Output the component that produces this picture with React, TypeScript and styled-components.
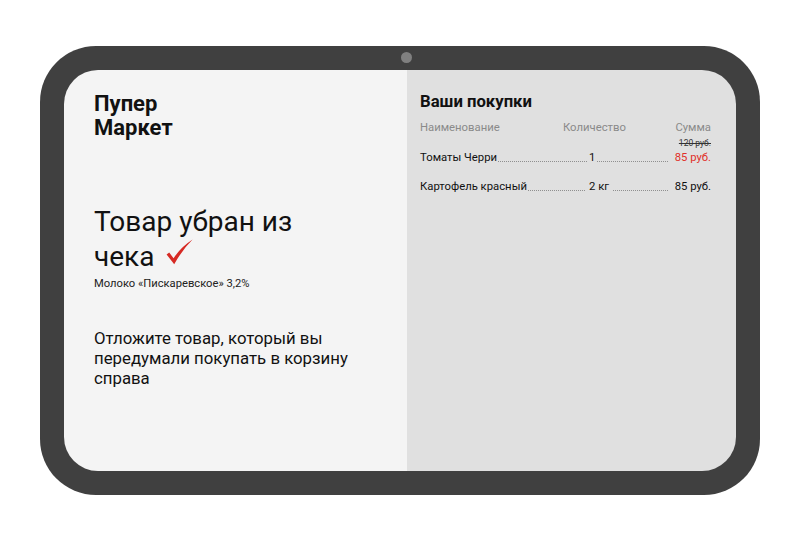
import React from "react";
import styled, { createGlobalStyle } from "styled-components";

const Global = createGlobalStyle`
  html, body { margin: 0; padding: 0; background: #ffffff; }
  body { font-family: Roboto, "Noto Sans", Arial, sans-serif; color: #111; }
`;

const Page = styled.div`
  width: 800px;
  height: 537px;
  padding: 46px 40px 0 40px;
  box-sizing: border-box;
`;

const Device = styled.div`
  position: relative;
  width: 720px;
  height: 449px;
  box-sizing: border-box;
  padding: 24px;
  background: #404040;
  border-radius: 56px;
`;

const Camera = styled.div`
  position: absolute;
  left: 361px;
  top: 6px;
  width: 11px;
  height: 11px;
  border-radius: 50%;
  background: #808080;
`;

const Screen = styled.div`
  display: flex;
  height: 100%;
  border-radius: 34px;
  overflow: hidden;
`;

const LeftPanel = styled.div`
  width: 343px;
  flex: none;
  box-sizing: border-box;
  padding: 22px 30px 0 30px;
  background: #f4f4f4;
  display: flex;
  flex-direction: column;
`;

const Brand = styled.div`
  font-size: 22px;
  font-weight: 700;
  line-height: 24px;
  color: #111;
`;

const Status = styled.div`
  margin-top: 64px;
  font-size: 28px;
  line-height: 35px;
  color: #111;
`;

const Check = styled.svg`
  width: 27px;
  height: 26px;
  margin-left: 12px;
  vertical-align: 1px;
`;

const ProductName = styled.div`
  margin-top: 2px;
  font-size: 11.2px;
  line-height: 16px;
  color: #222;
`;

const Hint = styled.div`
  margin-top: 36px;
  font-size: 16.8px;
  line-height: 20px;
  color: #111;
`;

const RightPanel = styled.div`
  flex: 1;
  box-sizing: border-box;
  padding: 22px 25px 0 13px;
  background: #e0e0e0;
`;

const CartTitle = styled.div`
  font-size: 16.7px;
  font-weight: 700;
  line-height: 20px;
  color: #111;
`;

const HeaderRow = styled.div`
  margin-top: 8px;
  display: grid;
  grid-template-columns: 143px 1fr auto;
  font-size: 11.3px;
  line-height: 16px;
  color: #8a8a8a;
`;

const ItemRow = styled.div<{ $top: number }>`
  margin-top: ${(p) => p.$top}px;
  display: grid;
  grid-template-columns: 169px auto 1fr auto;
  align-items: end;
  font-size: 11.3px;
  line-height: 16px;
  color: #111;
`;

const NameCell = styled.div`
  display: flex;
  align-items: flex-end;
  gap: 1px;
`;

const Leader = styled.span<{ $gapL?: number; $gapR?: number }>`
  flex: 1;
  height: 0;
  border-bottom: 1px dotted #8f8f8f;
  margin: 0 ${(p) => p.$gapR ?? 2}px 4px ${(p) => p.$gapL ?? 0}px;
  align-self: end;
`;

const Qty = styled.span`
  white-space: nowrap;
`;

const SumCell = styled.div`
  position: relative;
  text-align: right;
  min-width: 35px;
`;

const OldPrice = styled.span`
  position: absolute;
  right: 0;
  top: -13px;
  font-size: 8.5px;
  line-height: 12px;
  color: #333;
  text-decoration: line-through;
  white-space: nowrap;
`;

const Price = styled.span<{ $sale?: boolean }>`
  color: ${(p) => (p.$sale ? "#e0302a" : "#111")};
  white-space: nowrap;
`;

export default function App() {
  return (
    <>
      <Global />
      <Page>
        <Device>
          <Camera />
          <Screen>
            <LeftPanel>
              <Brand>
                Пупер
                <br />
                Маркет
              </Brand>
              <Status>
                Товар убран из
                <br />
                чека
                <Check viewBox="0 0 27 26">
                  <path
                    d="M0.6 15.6 L3.2 13.6 L7.6 19.2 Q14.5 8.5 26.6 0.6 Q16.5 10.5 8.2 25.2 Z"
                    fill="#d62a24"
                  />
                </Check>
              </Status>
              <ProductName>Молоко «Пискаревское» 3,2%</ProductName>
              <Hint>
                Отложите товар, который вы
                <br />
                передумали покупать в корзину
                <br />
                справа
              </Hint>
            </LeftPanel>
            <RightPanel>
              <CartTitle>Ваши покупки</CartTitle>
              <HeaderRow>
                <span>Наименование</span>
                <span>Количество</span>
                <span>Сумма</span>
              </HeaderRow>
              <ItemRow $top={14}>
                <NameCell>
                  Томаты Черри
                  <Leader />
                </NameCell>
                <Qty>1</Qty>
                <Leader $gapL={2} $gapR={7} />
                <SumCell>
                  <OldPrice>120 руб.</OldPrice>
                  <Price $sale>85 руб.</Price>
                </SumCell>
              </ItemRow>
              <ItemRow $top={13}>
                <NameCell>
                  Картофель красный
                  <Leader $gapR={4} />
                </NameCell>
                <Qty>2 кг</Qty>
                <Leader $gapL={4} $gapR={7} />
                <SumCell>
                  <Price>85 руб.</Price>
                </SumCell>
              </ItemRow>
            </RightPanel>
          </Screen>
        </Device>
      </Page>
    </>
  );
}
